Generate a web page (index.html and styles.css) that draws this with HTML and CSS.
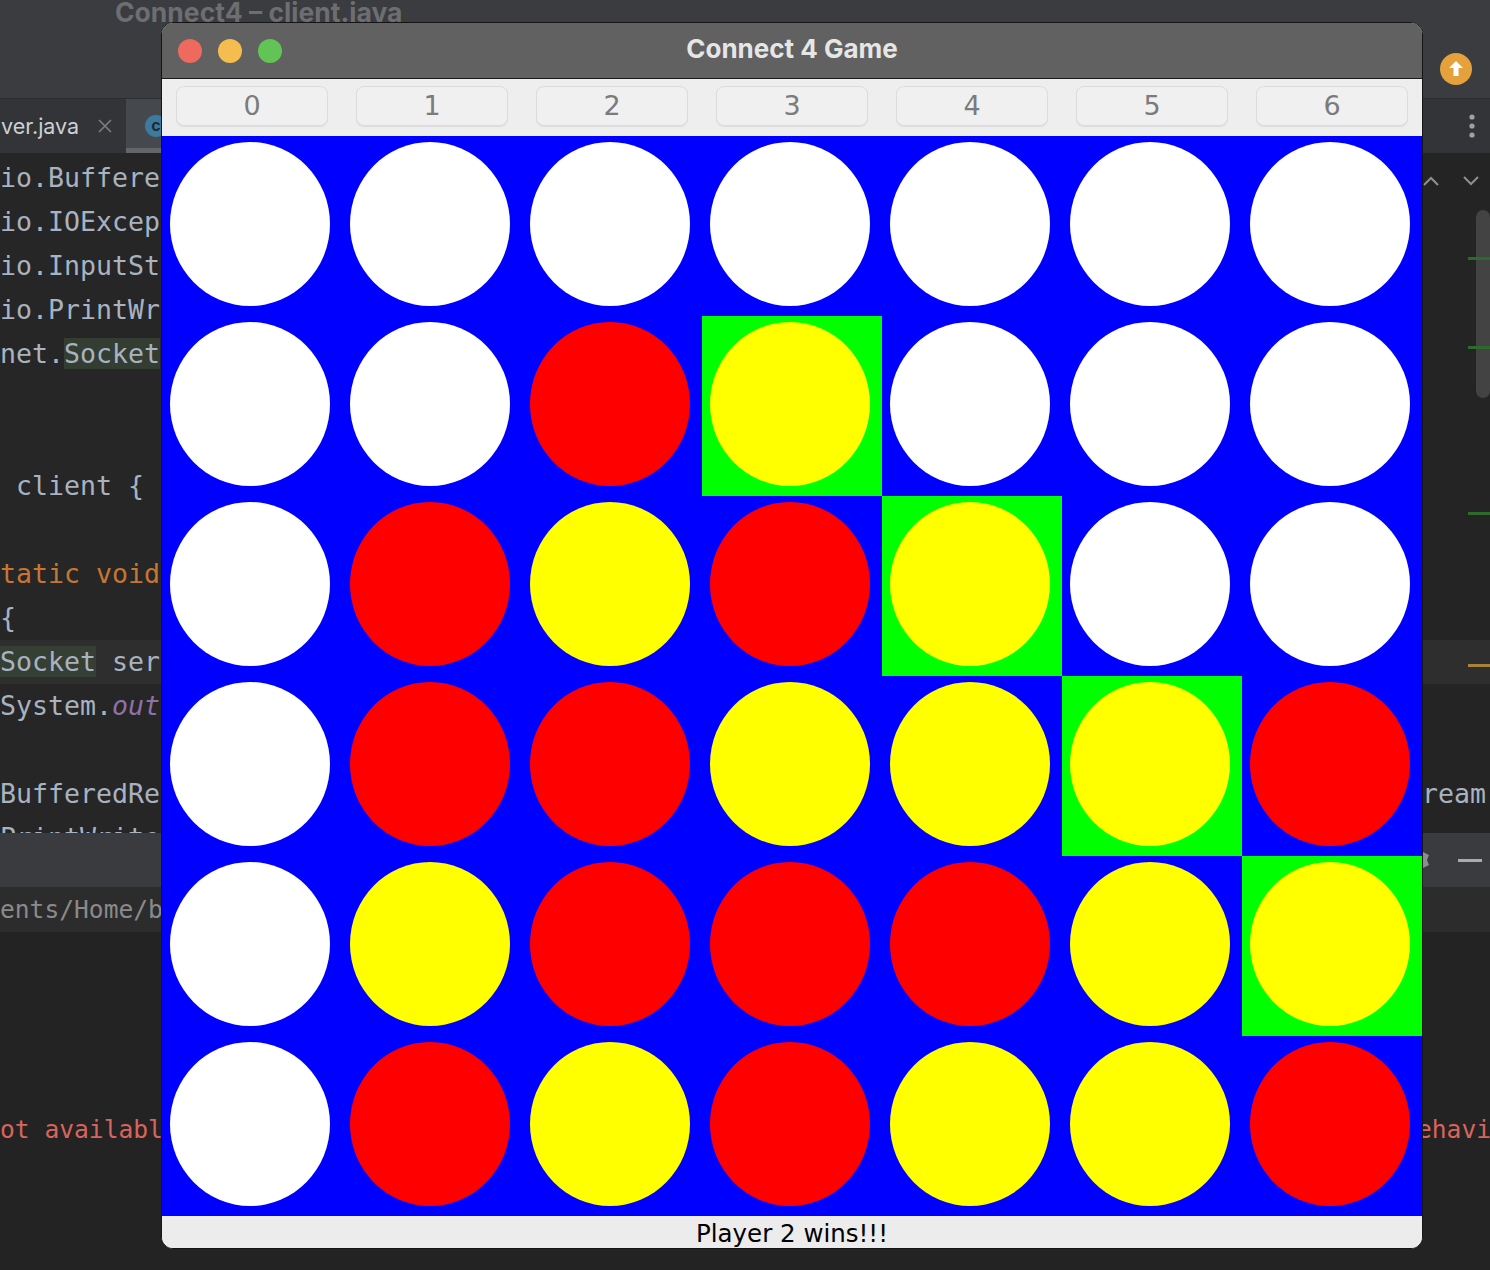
FILE: index.html
```html
<!DOCTYPE html>
<html>
<head>
<meta charset="utf-8">
<title>Connect 4 Game</title>
<link rel="stylesheet" href="styles.css">
</head>
<body>
<div class="ide">
  <header class="ide-title">
    <span class="ide-title-text">Connect4 – client.java</span>
    <span class="update">
      <svg width="32" height="32" viewBox="0 0 32 32"><circle cx="16" cy="16" r="16" fill="#e4a13c"/><path d="M16 8 L9 15 H13.5 V23 H18.5 V15 H23 Z" fill="#fff"/></svg>
    </span>
  </header>
  <nav class="tabs">
    <div class="tab">ver.java<span class="tab-x"><svg width="14" height="14" viewBox="0 0 14 14"><path d="M1 1 L13 13 M13 1 L1 13" stroke="#7c7f83" stroke-width="1.6"/></svg></span></div>
    <div class="tab tab-active"><span class="cicon">c</span>client.java</div>
    <div class="tabs-fill"></div>
    <div class="more"><svg width="6" height="24" viewBox="0 0 6 24"><circle cx="3" cy="3" r="2.6" fill="#9fa1a4"/><circle cx="3" cy="12" r="2.6" fill="#9fa1a4"/><circle cx="3" cy="21" r="2.6" fill="#9fa1a4"/></svg></div>
  </nav>
  <section class="editor">
    <div class="code">
      <div class="ln">io.BufferedReader;</div>
      <div class="ln">io.IOException;</div>
      <div class="ln">io.InputStream;</div>
      <div class="ln">io.PrintWriter;</div>
      <div class="ln">net.<span class="hl">Socket</span>;</div>
      <div class="ln"></div>
      <div class="ln"></div>
      <div class="ln"> client {</div>
      <div class="ln"></div>
      <div class="ln"><span class="kw">tatic void</span> main(String[] args)</div>
      <div class="ln">{</div>
      <div class="ln cur"><span class="hl2">Socket</span> server = new Socket("localhost", 5000);</div>
      <div class="ln">System.<span class="field">out</span>.println("Connected");</div>
      <div class="ln"></div>
      <div class="ln">BufferedReader in = new BufferedReader(new InputStreamReader(server.getInputStream()));</div>
      <div class="ln">PrintWriter out = new PrintWriter(server.getOutputStream(), true);</div>
    </div>
    <div class="code-right">
      <div class="ln"></div>
      <div class="ln"></div>
      <div class="ln"></div>
      <div class="ln"></div>
      <div class="ln"></div>
      <div class="ln"></div>
      <div class="ln"></div>
      <div class="ln"></div>
      <div class="ln"></div>
      <div class="ln"></div>
      <div class="ln"></div>
      <div class="ln cur"></div>
      <div class="ln"></div>
      <div class="ln"></div>
      <div class="ln">ream</div>
      <div class="ln"></div>
      <div class="nav-arrows">
        <svg width="16" height="10" viewBox="0 0 16 10"><path d="M1 9 L8 2 L15 9" fill="none" stroke="#8d8f92" stroke-width="2"/></svg>
        <svg width="16" height="10" viewBox="0 0 16 10"><path d="M1 1 L8 8 L15 1" fill="none" stroke="#8d8f92" stroke-width="2"/></svg>
      </div>
      <div class="scroll-thumb"></div>
      <div class="mark green m1"></div>
      <div class="mark green m2"></div>
      <div class="mark green m3"></div>
      <div class="mark orange m4"></div>
    </div>
  </section>
  <section class="run-head">
    <div class="run-icons">
      <svg width="10" height="22" viewBox="0 0 10 22"><path d="M0 3 L6 6 L4 11 L6 16 L0 19 Z" fill="#8b8d90"/></svg>
      <span class="minus"></span>
    </div>
  </section>
  <section class="console">
    <div class="con-left">
      <div class="ln path">ents/Home/bin/java -javaagent</div>
      <div class="ln"></div>
      <div class="ln"></div>
      <div class="ln"></div>
      <div class="ln"></div>
      <div class="ln err">ot available, using default behavior</div>
    </div>
    <div class="con-right">
      <div class="ln path"></div>
      <div class="ln"></div>
      <div class="ln"></div>
      <div class="ln"></div>
      <div class="ln"></div>
      <div class="ln err tail">ehavior</div>
    </div>
  </section>
</div>

<div class="jwin">
  <div class="jtitle">
    <div class="lights"><span class="light red"></span><span class="light amber"></span><span class="light green"></span></div>
    <div class="jtitle-text">Connect 4 Game</div>
    <div></div>
  </div>
  <div class="jbuttons">
    <div class="jbtn">0</div>
    <div class="jbtn">1</div>
    <div class="jbtn">2</div>
    <div class="jbtn">3</div>
    <div class="jbtn">4</div>
    <div class="jbtn">5</div>
    <div class="jbtn">6</div>
  </div>
  <div class="board">
    <div class="cell"><span class="disc w"></span></div>
    <div class="cell"><span class="disc w"></span></div>
    <div class="cell"><span class="disc w"></span></div>
    <div class="cell"><span class="disc w"></span></div>
    <div class="cell"><span class="disc w"></span></div>
    <div class="cell"><span class="disc w"></span></div>
    <div class="cell"><span class="disc w"></span></div>

    <div class="cell"><span class="disc w"></span></div>
    <div class="cell"><span class="disc w"></span></div>
    <div class="cell"><span class="disc r"></span></div>
    <div class="cell win"><span class="disc y"></span></div>
    <div class="cell"><span class="disc w"></span></div>
    <div class="cell"><span class="disc w"></span></div>
    <div class="cell"><span class="disc w"></span></div>

    <div class="cell"><span class="disc w"></span></div>
    <div class="cell"><span class="disc r"></span></div>
    <div class="cell"><span class="disc y"></span></div>
    <div class="cell"><span class="disc r"></span></div>
    <div class="cell win"><span class="disc y"></span></div>
    <div class="cell"><span class="disc w"></span></div>
    <div class="cell"><span class="disc w"></span></div>

    <div class="cell"><span class="disc w"></span></div>
    <div class="cell"><span class="disc r"></span></div>
    <div class="cell"><span class="disc r"></span></div>
    <div class="cell"><span class="disc y"></span></div>
    <div class="cell"><span class="disc y"></span></div>
    <div class="cell win"><span class="disc y"></span></div>
    <div class="cell"><span class="disc r"></span></div>

    <div class="cell"><span class="disc w"></span></div>
    <div class="cell"><span class="disc y"></span></div>
    <div class="cell"><span class="disc r"></span></div>
    <div class="cell"><span class="disc r"></span></div>
    <div class="cell"><span class="disc r"></span></div>
    <div class="cell"><span class="disc y"></span></div>
    <div class="cell win"><span class="disc y"></span></div>

    <div class="cell"><span class="disc w"></span></div>
    <div class="cell"><span class="disc r"></span></div>
    <div class="cell"><span class="disc y"></span></div>
    <div class="cell"><span class="disc r"></span></div>
    <div class="cell"><span class="disc y"></span></div>
    <div class="cell"><span class="disc y"></span></div>
    <div class="cell"><span class="disc r"></span></div>
  </div>
  <div class="status">Player 2 wins!!!</div>
</div>
</body>
</html>
```

FILE: styles.css
```css
html, body {
  margin: 0;
  padding: 0;
}
body {
  width: 1490px;
  height: 1270px;
  overflow: hidden;
  position: relative;
  background: #232323;
  font-family: "DejaVu Sans", sans-serif;
}

/* ---------- IDE background ---------- */
.ide {
  display: flex;
  flex-direction: column;
  height: 1270px;
}
.ide-title {
  height: 99px;
  box-sizing: border-box;
  background: #3a3c3f;
  border-bottom: 1px solid #2b2d30;
  display: flex;
  align-items: flex-start;
}
.ide-title-text {
  margin-left: 115px;
  font-family: "Inter", "Liberation Sans", sans-serif;
  font-weight: 700;
  font-size: 26.5px;
  line-height: 25px;
  color: #6c6e71;
  white-space: nowrap;
}
.update {
  margin-left: auto;
  margin-right: 18px;
  margin-top: 53px;
  width: 32px;
  height: 32px;
  display: block;
}
.update svg { display: block; }

.tabs {
  height: 54px;
  background: #323437;
  display: flex;
  align-items: stretch;
}
.tab {
  display: flex;
  align-items: center;
  font-family: "Inter", "Liberation Sans", sans-serif;
  font-size: 21.5px;
  color: #cdd0d3;
  white-space: nowrap;
}
.tab:first-child {
  width: 126px;
  padding-left: 1px;
  box-sizing: border-box;
}
.tab-x {
  margin-left: 19px;
  display: flex;
}
.tab-active {
  background: #45484c;
  padding-left: 19px;
  padding-right: 20px;
  border-bottom: 5px solid #62666b;
  box-sizing: border-box;
  gap: 10px;
}
.cicon {
  width: 22px;
  height: 22px;
  border-radius: 50%;
  background: #3c7b9d;
  color: #1d2a33;
  font-size: 16px;
  font-weight: bold;
  line-height: 21px;
  text-align: center;
  margin-top: 5px;
}
.tabs-fill { flex: 1; }
.more {
  width: 21px;
  display: flex;
  align-items: center;
  justify-content: flex-start;
}

.editor {
  height: 680px;
  background: #262626;
  display: flex;
  font-family: "DejaVu Sans Mono", monospace;
  font-size: 26.58px;
  color: #a8b3c1;
}
.code {
  width: 1422px;
  overflow: hidden;
  padding-top: 3px;
}
.code-right {
  width: 68px;
  padding-top: 3px;
  position: relative;
  overflow: hidden;
  background: #242424;
}
.ln {
  height: 44px;
  line-height: 44px;
  white-space: pre;
}
.cur { background: #2e2e2e; }
.hl { background: #343d31; }
.hl2 { background: #363f33; }
.kw { color: #c57633; }
.field { color: #9071a6; font-style: italic; }

.nav-arrows {
  position: absolute;
  top: 23px;
  left: 0;
  width: 68px;
  display: flex;
  justify-content: space-between;
  padding: 0 11px 0 1px;
  box-sizing: border-box;
}
.scroll-thumb {
  position: absolute;
  left: 54px;
  top: 57px;
  width: 14px;
  height: 188px;
  border-radius: 7px;
  background: #434343;
}
.mark {
  position: absolute;
  left: 46px;
  width: 22px;
  height: 3px;
}
.mark.green { background: #2d6a2b; }
.mark.orange { background: #a88236; }
.m1 { top: 104px; }
.m2 { top: 193px; }
.m3 { top: 359px; }
.m4 { top: 511px; }

.run-head {
  height: 55px;
  box-sizing: border-box;
  background: #393b3e;
  border-bottom: 1px solid #2a2b2c;
  display: flex;
  justify-content: flex-end;
  align-items: center;
}
.run-icons {
  width: 68px;
  display: flex;
  align-items: center;
  gap: 25px;
  padding-left: 1px;
  box-sizing: border-box;
}
.minus {
  width: 24px;
  height: 3px;
  background: #a9abad;
}

.console {
  flex: 1;
  display: flex;
  background: #232323;
  font-family: "DejaVu Sans Mono", monospace;
  font-size: 24.6px;
}
.con-left {
  width: 1422px;
  overflow: hidden;
}
.con-right {
  width: 68px;
}
.path {
  background: #2c2c2c;
  color: #8a8a8a;
}
.err { color: #d8655d; }
.tail { margin-left: -5px; }

/* ---------- Java window ---------- */
.jwin {
  position: absolute;
  left: 161px;
  top: 22px;
  width: 1262px;
  height: 1227px;
  box-sizing: border-box;
  border: 1px solid #151515;
  border-radius: 12px;
  overflow: hidden;
  display: flex;
  flex-direction: column;
  background: #ececec;
}
.jtitle {
  height: 56px;
  box-sizing: border-box;
  background: #616161;
  border-bottom: 1px solid #1a1a1a;
  display: grid;
  grid-template-columns: 1fr auto 1fr;
  align-items: center;
}
.lights {
  display: flex;
  gap: 16px;
  padding-left: 16px;
}
.light {
  width: 24px;
  height: 24px;
  border-radius: 50%;
}
.light.red { background: #ee6a5f; }
.light.amber { background: #f5bd4f; }
.light.green { background: #61c454; }
.jtitle-text {
  font-family: "Inter", "Liberation Sans", sans-serif;
  font-weight: 700;
  font-size: 26px;
  line-height: 30px;
  margin-top: -3px;
  color: #e6e6e6;
  white-space: nowrap;
}

.jbuttons {
  height: 57px;
  background: #eeeeee;
  display: grid;
  grid-template-columns: repeat(7, 180px);
  align-items: start;
}
.jbtn {
  margin: 7px 14px 0 14px;
  height: 40px;
  box-sizing: border-box;
  border: 1px solid #dcdcdc;
  border-radius: 8px;
  background: #f0f0f0;
  box-shadow: 0 1px 1px rgba(0,0,0,0.07);
  font-family: "DejaVu Sans", sans-serif;
  font-size: 27px;
  line-height: 38px;
  text-align: center;
  color: #7b7b7b;
  overflow: hidden;
}

.board {
  height: 1080px;
  background: #0000ff;
  display: grid;
  grid-template-columns: repeat(7, 180px);
  grid-template-rows: repeat(6, 180px);
}
.cell {
  padding: 6px 0 0 8px;
  box-sizing: border-box;
}
.cell.win { background: #00ff00; }
.disc {
  display: block;
  width: 160px;
  height: 164px;
  border-radius: 50%;
}
.disc.w { background: #ffffff; }
.disc.r { background: #ff0000; }
.disc.y { background: #ffff00; }

.status {
  height: 32px;
  background: #ececec;
  text-align: center;
  font-family: "DejaVu Sans", sans-serif;
  font-size: 24.5px;
  line-height: 36px;
  color: #000;
  white-space: nowrap;
}
```
